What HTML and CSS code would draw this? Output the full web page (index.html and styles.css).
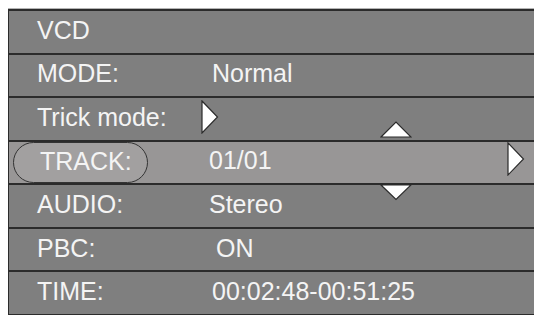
FILE: index.html
```html
<!DOCTYPE html>
<html>
<head>
<meta charset="utf-8">
<link rel="stylesheet" href="styles.css">
</head>
<body>
<div class="panel">
  <div class="row"><span class="label">VCD</span></div>
  <div class="row"><span class="label">MODE:</span><span class="value">Normal</span></div>
  <div class="row"><span class="label">Trick mode:</span>
    <svg class="tri-small" width="18" height="34" viewBox="0 0 18 34"><polygon points="1,1 16.5,17 1,33" fill="#fff" stroke="#2a2a2a" stroke-width="1.2"/></svg>
  </div>
  <div class="row row-active"><span class="pill">TRACK:</span><span class="value value-track">01/01</span>
    <svg class="tri-right" width="18" height="34" viewBox="0 0 18 34"><polygon points="1,1 16.5,17 1,33" fill="#fff" stroke="#2a2a2a" stroke-width="1.2"/></svg>
  </div>
  <div class="row"><span class="label">AUDIO:</span><span class="value value-audio">Stereo</span></div>
  <div class="row"><span class="label">PBC:</span><span class="value value-pbc">ON</span></div>
  <div class="row"><span class="label">TIME:</span><span class="value">00:02:48-00:51:25</span></div>
  <svg class="arrow arrow-up" width="32" height="17" viewBox="0 0 32 17"><polygon points="1,16 16,1 31,16" fill="#fff" stroke="#2a2a2a" stroke-width="1.2"/></svg>
  <svg class="arrow arrow-down" width="32" height="17" viewBox="0 0 32 17"><polygon points="1,1 16,15.5 31,1" fill="#fff" stroke="#2a2a2a" stroke-width="1.2"/></svg>
</div>
</body>
</html>
```
FILE: styles.css
```css
html, body {
  margin: 0;
  padding: 0;
  background: #ffffff;
  overflow: hidden;
}
body {
  width: 534px;
  height: 315px;
}
.panel {
  position: relative;
  margin: 9px 0 0 8px;
  width: 540px;
  height: 305px;
  background: #7f7f7f;
  border-top: 2px solid #2b2b2b;
  border-left: 1px solid #2b2b2b;
  box-shadow: 0 -1px 0 #b4b4b4;
  display: grid;
  grid-template-rows: repeat(7, 1fr);
  font-family: "Liberation Sans", Arial, sans-serif;
  font-size: 25px;
  color: #f4f4f4;
}
.row {
  display: flex;
  align-items: center;
  border-bottom: 2px solid #2b2b2b;
  padding-bottom: 3px;
  min-height: 0;
}
.row-active {
  background: #989696;
}
.label {
  box-sizing: border-box;
  width: 200px;
  padding-left: 28px;
  flex: none;
}
.value {
  padding-left: 3px;
}
.value-track { padding-left: 0; }
.value-audio { padding-left: 0; }
.value-pbc { padding-left: 7px; }
.tri-small {
  flex: none;
  width: 18px;
  height: 34px;
  margin-left: -8px;
  display: block;
}
.pill {
  box-sizing: border-box;
  flex: none;
  margin-left: 4px;
  margin-top: 3px;
  width: 135px;
  height: 41px;
  border: 1px solid #333;
  border-radius: 21px;
  background: #a2a0a0;
  padding-left: 26px;
  display: flex;
  align-items: center;
  padding-bottom: 2px;
  margin-right: 61px;
}
.tri-right {
  flex: none;
  width: 18px;
  height: 34px;
  margin-left: auto;
  margin-right: 24px;
  margin-bottom: 3px;
  display: block;
}
.arrow {
  position: absolute;
  left: 371px;
  width: 32px;
  height: 17px;
}
.arrow-up { top: 110px; }
.arrow-down { top: 173px; }
```
